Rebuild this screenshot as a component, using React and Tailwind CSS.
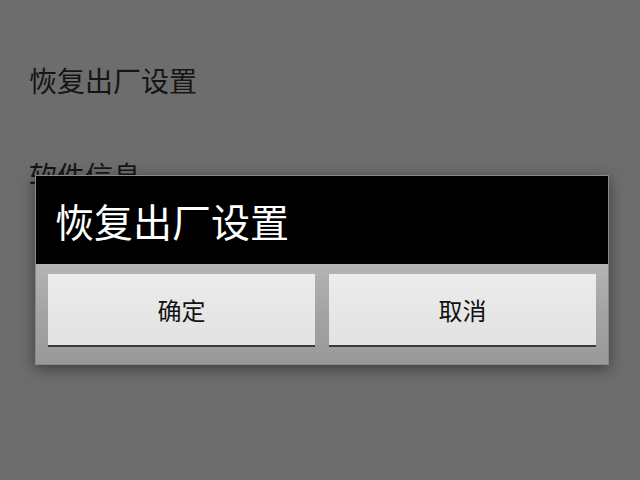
export default function App() {
  return (
    <div
      className="relative h-[480px] w-[640px] overflow-hidden bg-[#6d6d6d]"
      style={{ fontFamily: '"Noto Sans CJK SC", "Noto Sans", sans-serif' }}
    >
      {/* settings list behind the dialog */}
      <div className="flex flex-col pl-[29px] pt-[60px] text-[28px] leading-[40px] text-[#151515]">
        <div>恢复出厂设置</div>
        <div className="mt-[55px]">软件信息</div>
      </div>

      {/* dialog */}
      <div className="absolute left-[35px] top-[175px] w-[574px] border border-[#8a8a8a] shadow-[0_4px_14px_rgba(0,0,0,0.45)]">
        <div className="flex h-[88px] items-center bg-black pl-[19px] pt-[1px] text-[39px] text-white">
          恢复出厂设置
        </div>
        <div className="flex h-[100px] gap-[14px] bg-gradient-to-b from-[#b4b4b4] via-[#a3a3a3] to-[#999999] px-[12px] pt-[10px]">
          <button className="flex h-[73px] flex-1 items-center justify-center border-b-2 border-[#3a3a3a] bg-gradient-to-b from-[#ececec] to-[#e2e2e2] text-[24px] text-[#111]">
            确定
          </button>
          <button className="flex h-[73px] flex-1 items-center justify-center border-b-2 border-[#3a3a3a] bg-gradient-to-b from-[#ececec] to-[#e2e2e2] text-[24px] text-[#111]">
            取消
          </button>
        </div>
      </div>
    </div>
  );
}
